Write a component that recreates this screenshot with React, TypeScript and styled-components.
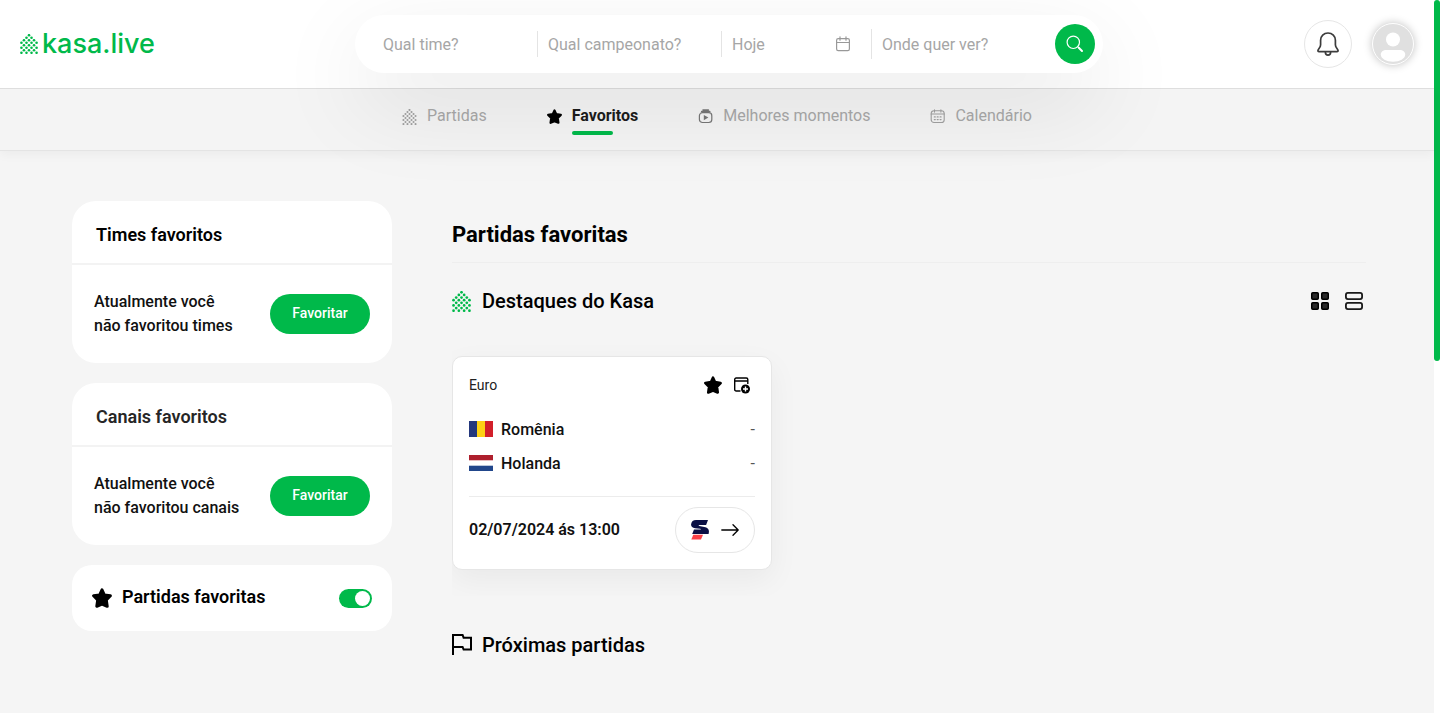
import React from "react";
import styled, { createGlobalStyle } from "styled-components";

const GREEN = "#00b94a";

const GlobalStyle = createGlobalStyle`
  *, *::before, *::after { box-sizing: border-box; }
  body {
    margin: 0;
    background: #f5f5f5;
    color: #000;
    font-family: Roboto, "Liberation Sans", sans-serif;
    font-size: 16px;
  }
  h1, h2, h3, p, ul { margin: 0; padding: 0; }
  ul { list-style: none; }
  button, input { font-family: inherit; }
  button { cursor: pointer; padding: 0; border: 0; background: none; color: inherit; }
  a { color: inherit; text-decoration: none; }
  svg { display: block; flex: none; }
`;

const Shell = styled.div`
  display: grid;
  grid-template-columns: minmax(0, 1fr) 6px;
  min-height: 100vh;
`;

const ScrollTrack = styled.div`
  position: sticky;
  top: 0;
  height: 100vh;
  background: #fff;
`;

const ScrollThumb = styled.div`
  height: calc(50% + 4px);
  border-radius: 3px;
  background: ${GREEN};
`;

const Header = styled.header`
  position: relative;
  z-index: 2;
  display: flex;
  align-items: center;
  justify-content: space-between;
  padding: 15px 20px;
  background: #fff;
  border-bottom: 1px solid #dedede;
`;

const Logo = styled.a`
  display: flex;
  align-items: center;
  gap: 4px;
  width: 134px;
  color: ${GREEN};
  font-family: Inter, sans-serif;
  font-size: 27px;
  font-weight: 500;
  line-height: 30px;
`;

const SearchForm = styled.form`
  display: flex;
  align-items: center;
  width: 748px;
  height: 58px;
  padding: 0 8px 0 28px;
  border-radius: 29px;
  background: #fff;
  box-shadow: 0 30px 90px rgba(0, 0, 0, 0.1);
`;

const Field = styled.label<{ $width?: number; $first?: boolean; $tall?: boolean }>`
  display: flex;
  align-items: center;
  flex: ${(p) => (p.$width ? `0 0 ${p.$width}px` : "1 1 0")};
  min-width: 0;
  height: ${(p) => (p.$tall ? 30 : 26)}px;
  padding: ${(p) => (p.$first ? "0" : "0 21px 0 10px")};
  border-left: ${(p) => (p.$first ? "0" : "1px solid #e4e4e4")};
  color: #999;
`;

const FieldInput = styled.input`
  flex: 1;
  min-width: 0;
  width: 100%;
  padding: 2px 0 0;
  border: 0;
  outline: 0;
  background: transparent;
  color: #333;
  font-size: 16px;
  line-height: 24px;
  &::placeholder { color: #a6a6a6; opacity: 1; }
`;

const SearchButton = styled.button`
  display: grid;
  place-items: center;
  width: 40px;
  height: 40px;
  border-radius: 50%;
  background: ${GREEN};
  color: #fff;
`;

const Account = styled.div`
  display: flex;
  align-items: center;
  gap: 20px;
`;

const BellButton = styled.button`
  display: grid;
  place-items: center;
  width: 48px;
  height: 48px;
  border: 1px solid #e6e6e6;
  border-radius: 50%;
  background: #fff;
  color: #3c3c3c;
`;

const AvatarButton = styled.button`
  width: 42px;
  height: 42px;
  border: 1px solid #fff;
  border-radius: 50%;
  overflow: hidden;
  background: #e0e0e0;
  box-shadow: 0 0 8px rgba(0, 0, 0, 0.25);
`;

const Nav = styled.nav`
  position: relative;
  z-index: 1;
  display: flex;
  justify-content: center;
  gap: 60px;
  padding: 17px 0 15px;
  background: #f4f4f4;
  border-bottom: 1px solid #e4e4e4;
  box-shadow: 0 4px 10px rgba(0, 0, 0, 0.04);
`;

const NavLink = styled.a<{ $active?: boolean }>`
  display: flex;
  align-items: flex-start;
  gap: 10px;
  color: ${(p) => (p.$active ? "#1c1c1c" : "#a8a8a8")};
  font-weight: ${(p) => (p.$active ? 700 : 400)};
  line-height: 19px;
  svg { margin-top: 3px; color: ${(p) => (p.$active ? "#000" : "#a0a0a0")}; }
`;

const NavLabel = styled.span<{ $active?: boolean }>`
  &::after {
    content: "";
    display: block;
    width: 41px;
    height: 4px;
    margin-top: 6px;
    border-radius: 2px;
    background: ${(p) => (p.$active ? GREEN : "transparent")};
  }
`;

const Content = styled.div`
  display: grid;
  grid-template-columns: 320px minmax(0, 1fr);
  gap: 60px;
  padding: 50px 68px 0 72px;
`;

const Sidebar = styled.aside`
  display: flex;
  flex-direction: column;
  gap: 20px;
`;

const Panel = styled.section`
  border-radius: 24px;
  background: #fff;
`;

const PanelTitle = styled.h2<{ $soft?: boolean }>`
  padding: 22px 24px 16px;
  border-bottom: 2px solid #f3f3f3;
  color: ${(p) => (p.$soft ? "#262626" : "#000")};
  font-size: 18px;
  font-weight: 600;
  line-height: 24px;
`;

const PanelBody = styled.div`
  display: flex;
  align-items: center;
  justify-content: space-between;
  padding: 25px 22px;
`;

const PanelText = styled.p`
  color: #111;
  font-weight: 500;
  line-height: 24px;
`;

const FavoriteButton = styled.button`
  width: 100px;
  height: 40px;
  padding-bottom: 2px;
  border-radius: 20px;
  background: ${GREEN};
  color: #fff;
  font-size: 14px;
  font-weight: 500;
`;

const TogglePanel = styled.label`
  display: flex;
  align-items: center;
  gap: 10px;
  height: 66px;
  padding: 0 20px;
  border-radius: 20px;
  background: #fff;
  font-size: 18px;
  font-weight: 600;
  line-height: 24px;
  cursor: pointer;
`;

const ToggleText = styled.span`
  flex: 1;
  padding-bottom: 2px;
`;

const Toggle = styled.input`
  appearance: none;
  width: 33px;
  height: 19px;
  margin: 0;
  padding: 2px;
  border-radius: 10px;
  background: #ccc;
  cursor: pointer;
  &::before {
    content: "";
    display: block;
    width: 15px;
    height: 15px;
    border-radius: 50%;
    background: #fff;
  }
  &:checked { background: ${GREEN}; }
  &:checked::before { margin-left: auto; }
`;

const PageTitle = styled.h1`
  padding: 18px 0 11px;
  border-bottom: 1px solid #eee;
  font-size: 22px;
  font-weight: 700;
  line-height: 32px;
`;

const SectionHead = styled.div<{ $top: number }>`
  display: flex;
  align-items: center;
  gap: 10px;
  height: 40px;
  margin-top: ${(p) => p.$top}px;
`;

const SectionMark = styled.span`
  width: 20px;
  color: ${GREEN};
`;

const SectionTitle = styled.h2`
  flex: 1;
  font-size: 20px;
  font-weight: 500;
  line-height: 24px;
`;

const ViewSwitch = styled.div`
  display: flex;
  gap: 16px;
  padding-right: 3px;
`;

const MatchList = styled.ul`
  overflow: hidden;
  padding: 35px 0 26px;
`;

const MatchCard = styled.li`
  width: 320px;
  padding: 16px;
  border: 1px solid #e6e6e6;
  border-radius: 10px;
  background: #fff;
  box-shadow: 0 10px 30px rgba(0, 0, 0, 0.05);
`;

const MatchTop = styled.div`
  display: flex;
  align-items: center;
  justify-content: space-between;
  height: 24px;
  margin-bottom: 15px;
  color: #222;
  font-size: 14px;
`;

const MatchActions = styled.div`
  display: flex;
  gap: 3px;
  color: #000;
`;

const IconButton = styled.button`
  display: grid;
  place-items: center;
  width: 26px;
  height: 24px;
`;

const Team = styled.div`
  display: flex;
  align-items: center;
  gap: 8px;
  height: 34px;
  color: #111;
  font-weight: 500;
`;

const TeamName = styled.span`
  flex: 1;
`;

const Score = styled.span`
  color: #555;
  font-weight: 400;
`;

const MatchFoot = styled.div`
  display: flex;
  align-items: center;
  justify-content: space-between;
  margin-top: 16px;
  padding-top: 10px;
  border-top: 1px solid #ececec;
  color: #111;
  font-weight: 600;
`;

const MatchDate = styled.time`
  padding-bottom: 2px;
`;

const WatchButton = styled.button`
  display: flex;
  align-items: center;
  justify-content: center;
  gap: 12px;
  width: 80px;
  height: 46px;
  border: 1px solid #e6e6e6;
  border-radius: 23px;
  background: #fff;
`;

const ROWS = [[3], [2, 4], [1, 3, 5], [0, 2, 4, 6], [1, 3, 5], [0, 2, 4, 6], [1, 3, 5], [0, 2, 4, 6]];

function HouseDots({ width, height }: { width: number; height: number }) {
  return (
    <svg width={width} height={height} viewBox="0 0 19 21.4" fill="currentColor" aria-hidden="true">
      {ROWS.map((cols, r) =>
        cols.map((c) => <circle key={`${r}-${c}`} cx={1.4 + c * 2.7} cy={1.3 + r * 2.68} r={1.4} />)
      )}
    </svg>
  );
}

function Star({ size }: { size: number }) {
  return (
    <svg width={size} height={size} viewBox="0 0 20 20" fill="currentColor" stroke="currentColor" strokeWidth="3" strokeLinejoin="round" aria-hidden="true">
      <path d="M10 1.9l2.3 5 6.1.9-4.1 4.2.9 6.3-5.2-2.1-5.2 2.1.9-6.3L1.6 7.8l6.1-.9z" />
    </svg>
  );
}

function DateIcon() {
  return (
    <svg width="14" height="16" viewBox="0 0 14 16" fill="none" stroke="currentColor" strokeWidth="1.2" strokeLinecap="round" aria-hidden="true">
      <rect x=".6" y="2.6" width="12.8" height="12" rx="1.6" />
      <path d="M.6 6.5h12.8M4 .8v3.4M10 .8v3.4" />
    </svg>
  );
}

function HighlightsIcon() {
  return (
    <svg width="15" height="15" viewBox="0 0 15 15" fill="none" stroke="#777" strokeWidth="1.2" strokeLinecap="round" aria-hidden="true">
      <path d="M5 1h5.4M3.6 2.6h8.2" strokeWidth="1.5" />
      <rect x="1.4" y="3.7" width="12.4" height="9.8" rx="3" />
      <path d="M5.800 5.900v5.400l4.600-2.700z" fill="#777" stroke="none" />
    </svg>
  );
}

function CalendarIcon() {
  return (
    <svg width="15" height="15" viewBox="0 0 15 15" fill="none" stroke="currentColor" strokeWidth="1.1" strokeLinecap="round" aria-hidden="true">
      <rect x="1.2" y="1.7" width="13" height="11.8" rx="2.8" />
      <path d="M1.200 5h13M4.500 .7v2.400M10.900 .7v2.400" />
      <path d="M4.400 7.900h.8M7.300 7.900h.8M10.200 7.900h.8M4.400 10.600h.8M7.300 10.600h.8M10.200 10.600h.8" strokeWidth="1.4" />
    </svg>
  );
}

function SearchIcon() {
  return (
    <svg width="18" height="18" viewBox="0 0 18 18" fill="none" stroke="currentColor" strokeLinecap="round" aria-hidden="true">
      <circle cx="7.3" cy="7.3" r="6.2" strokeWidth="1.2" />
      <path d="M11.9 11.9l1 1" strokeWidth="1.2" />
      <path d="M12.8 12.8l3.2 3.2" strokeWidth="2" />
    </svg>
  );
}

function BellIcon() {
  return (
    <svg width="22" height="24" viewBox="0 0 22 24" fill="none" stroke="currentColor" strokeWidth="1.7" strokeLinecap="round" strokeLinejoin="round" aria-hidden="true">
      <path d="M11 1C6.700 1 3.600 4.200 3.600 8.200v4.600c0 1.400-.5 2.300-1.400 3.400-.8 1-1.300 1.700-1.300 2.600 0 .6.400.9 1 .9h18.200c.6 0 1-.3 1-.9 0-.9-.5-1.600-1.300-2.600-.9-1.100-1.400-2-1.400-3.400V8.200C18.400 4.200 15.300 1 11 1z" />
      <path d="M8.400 20.200c0 1.700 1.100 2.900 2.600 2.900s2.600-1.200 2.600-2.900" />
    </svg>
  );
}

function AvatarIcon() {
  return (
    <svg width="40" height="40" viewBox="0 0 40 40" fill="#fff" aria-hidden="true">
      <circle cx="20" cy="15.5" r="7" />
      <path d="M13.500 26h13c3.500 0 5.700 1.800 5.700 4.600 0 4.200-5.500 7.200-12.200 7.200S7.800 34.800 7.800 30.600C7.800 27.800 10 26 13.500 26z" />
    </svg>
  );
}

function GridIcon() {
  return (
    <svg width="18" height="18" viewBox="0 0 18 18" fill="#2b2b2b" stroke="#000" strokeWidth="1.5" aria-hidden="true">
      <rect x=".75" y=".75" width="6.5" height="6.5" rx="1" />
      <rect x="10.75" y=".75" width="6.5" height="6.5" rx="1" />
      <rect x=".75" y="10.75" width="6.5" height="6.5" rx="1" />
      <rect x="10.75" y="10.75" width="6.5" height="6.5" rx="1" />
    </svg>
  );
}

function RowsIcon() {
  return (
    <svg width="18" height="18" viewBox="0 0 18 18" fill="none" stroke="#1a1a1a" strokeWidth="1.8" aria-hidden="true">
      <rect x=".9" y=".9" width="16.2" height="6.2" rx="2" />
      <rect x=".9" y="10.9" width="16.2" height="6.2" rx="2" />
    </svg>
  );
}

function AddToCalendarIcon() {
  return (
    <svg width="16" height="17" viewBox="0 0 16 17" fill="none" aria-hidden="true">
      <path d="M6.500 14H2.200C1.300 14 .7 13.400 .7 12.500V2.500C.7 1.600 1.300 1 2.200 1h10.100c.9 0 1.500.6 1.500 1.500V7M.7 4h13" stroke="#000" strokeWidth="1.4" />
      <circle cx="11.5" cy="12" r="4.5" fill="#000" />
      <path d="M11.500 9.500v5M9 12h5" stroke="#fff" strokeWidth="1.4" />
    </svg>
  );
}

function FlagIcon() {
  return (
    <svg width="20" height="22" viewBox="0 0 20 22" fill="none" stroke="#000" strokeWidth="2" aria-hidden="true">
      <path d="M1 21V1h9.600L11.600 3.700H19v11.800h-7.400l-1-2.500H1" />
    </svg>
  );
}

function RomaniaFlag() {
  return (
    <svg width="24" height="16" viewBox="0 0 24 16" aria-hidden="true">
      <path fill="#24387d" d="M0 0h8v16H0z" />
      <path fill="#fdd116" d="M8 0h8v16H8z" />
      <path fill="#d21f2a" d="M16 0h8v16h-8z" />
    </svg>
  );
}

function NetherlandsFlag() {
  return (
    <svg width="24" height="16" viewBox="0 0 24 16" aria-hidden="true">
      <path fill="#fff" d="M0 0h24v16H0z" />
      <path fill="#ae1f2d" d="M0 0h24v5.300H0z" />
      <path fill="#21468b" d="M0 10.700h24V16H0z" />
    </svg>
  );
}

function ChannelLogo() {
  return (
    <svg width="18" height="20" viewBox="0 0 18 20" aria-hidden="true">
      <path
        fill="#0a0f45"
        d="M5 0H17l-1.900 4.900H8.400c-1.300 0-1.300.8-.1 1.100L13.300 6.900c3.200.6 4.900 2.200 4.600 5L17.600 14H1.200l1.800-4.400h6.200c.9 0 .9-.6 0-.8L4.200 8.300C1.200 7.800-.1 6.600.1 4.300.4 1.500 2.200 0 5 0z"
      />
      <path fill="#fa4048" d="M2.300 14.700H12l-2 4.700H.3z" />
    </svg>
  );
}

function ArrowIcon() {
  return (
    <svg width="18" height="12" viewBox="0 0 18 12" fill="none" stroke="#000" strokeWidth="1.3" strokeLinecap="round" strokeLinejoin="round" aria-hidden="true">
      <path d="M.8 6h16.400M12 .8L17.200 6 12 11.200" />
    </svg>
  );
}

const NAV = [
  { label: "Partidas", icon: <HouseDots width={15} height={16} /> },
  { label: "Favoritos", icon: <Star size={15} />, active: true },
  { label: "Melhores momentos", icon: <HighlightsIcon /> },
  { label: "Calendário", icon: <CalendarIcon /> },
];

const PANELS = [
  { title: "Times favoritos", kind: "times" },
  { title: "Canais favoritos", kind: "canais", soft: true },
];

const TEAMS = [
  { name: "Romênia", flag: <RomaniaFlag /> },
  { name: "Holanda", flag: <NetherlandsFlag /> },
];

export default function App() {
  return (
    <>
      <GlobalStyle />
      <Shell>
        <div>
          <Header>
            <Logo href="#">
              <HouseDots width={18} height={20} />
              kasa.live
            </Logo>
            <SearchForm onSubmit={(e) => e.preventDefault()}>
              <Field $first $width={154}>
                <FieldInput placeholder="Qual time?" aria-label="Qual time?" />
              </Field>
              <Field $width={184}>
                <FieldInput placeholder="Qual campeonato?" aria-label="Qual campeonato?" />
              </Field>
              <Field $width={150}>
                <FieldInput placeholder="Hoje" aria-label="Data" />
                <DateIcon />
              </Field>
              <Field $tall>
                <FieldInput placeholder="Onde quer ver?" aria-label="Onde quer ver?" />
              </Field>
              <SearchButton aria-label="Buscar">
                <SearchIcon />
              </SearchButton>
            </SearchForm>
            <Account>
              <BellButton aria-label="Notificações">
                <BellIcon />
              </BellButton>
              <AvatarButton aria-label="Perfil">
                <AvatarIcon />
              </AvatarButton>
            </Account>
          </Header>

          <Nav>
            {NAV.map((item) => (
              <NavLink key={item.label} href="#" $active={item.active}>
                {item.icon}
                <NavLabel $active={item.active}>{item.label}</NavLabel>
              </NavLink>
            ))}
          </Nav>

          <Content>
            <Sidebar>
              {PANELS.map((panel) => (
                <Panel key={panel.kind}>
                  <PanelTitle $soft={panel.soft}>{panel.title}</PanelTitle>
                  <PanelBody>
                    <PanelText>
                      Atualmente você
                      <br />
                      não favoritou {panel.kind}
                    </PanelText>
                    <FavoriteButton>Favoritar</FavoriteButton>
                  </PanelBody>
                </Panel>
              ))}
              <TogglePanel>
                <Star size={20} />
                <ToggleText>Partidas favoritas</ToggleText>
                <Toggle type="checkbox" role="switch" defaultChecked />
              </TogglePanel>
            </Sidebar>

            <main>
              <PageTitle>Partidas favoritas</PageTitle>
              <SectionHead $top={18}>
                <SectionMark>
                  <HouseDots width={19} height={21} />
                </SectionMark>
                <SectionTitle>Destaques do Kasa</SectionTitle>
                <ViewSwitch>
                  <button aria-label="Ver em grade">
                    <GridIcon />
                  </button>
                  <button aria-label="Ver em lista">
                    <RowsIcon />
                  </button>
                </ViewSwitch>
              </SectionHead>

              <MatchList>
                <MatchCard>
                  <MatchTop>
                    <span>Euro</span>
                    <MatchActions>
                      <IconButton aria-label="Favoritar partida">
                        <Star size={18} />
                      </IconButton>
                      <IconButton aria-label="Adicionar ao calendário">
                        <AddToCalendarIcon />
                      </IconButton>
                    </MatchActions>
                  </MatchTop>
                  {TEAMS.map((team) => (
                    <Team key={team.name}>
                      {team.flag}
                      <TeamName>{team.name}</TeamName>
                      <Score>-</Score>
                    </Team>
                  ))}
                  <MatchFoot>
                    <MatchDate dateTime="2024-07-02T13:00">02/07/2024 ás 13:00</MatchDate>
                    <WatchButton aria-label="Assistir">
                      <ChannelLogo />
                      <ArrowIcon />
                    </WatchButton>
                  </MatchFoot>
                </MatchCard>
              </MatchList>

              <SectionHead $top={29}>
                <FlagIcon />
                <SectionTitle>Próximas partidas</SectionTitle>
              </SectionHead>
            </main>
          </Content>
        </div>
        <ScrollTrack>
          <ScrollThumb />
        </ScrollTrack>
      </Shell>
    </>
  );
}
